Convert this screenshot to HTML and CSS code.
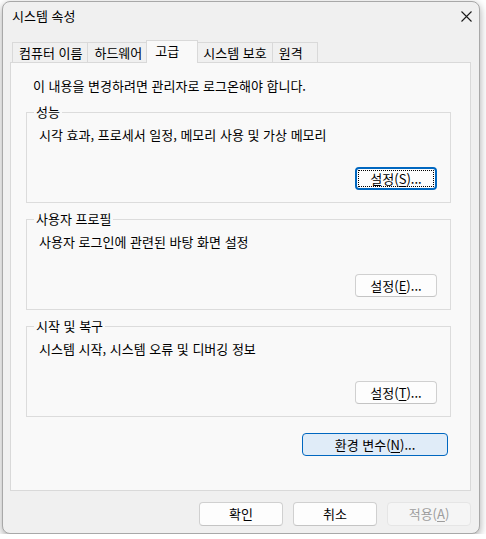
FILE: index.html
```html
<!DOCTYPE html>
<html lang="ko">
<head>
<meta charset="utf-8">
<title>시스템 속성</title>
<link rel="stylesheet" href="styles.css">
</head>
<body>
<div class="window">
  <div class="titlebar">
    <span class="title">시스템 속성</span>
    <span class="close" aria-label="닫기">
      <svg width="11" height="11" viewBox="0 0 11 11"><path d="M0.5 0.5 L10.5 10.5 M10.5 0.5 L0.5 10.5" stroke="#1a1a1a" stroke-width="1.1" fill="none"/></svg>
    </span>
  </div>
  <div class="content">
    <div class="tabs">
      <div class="tab">컴퓨터 이름</div>
      <div class="tab">하드웨어</div>
      <div class="tab tab-active">고급</div>
      <div class="tab">시스템 보호</div>
      <div class="tab">원격</div>
    </div>
    <div class="panel">
      <p class="note">이 내용을 변경하려면 관리자로 로그온해야 합니다.</p>
      <fieldset class="group">
        <legend>성능</legend>
        <p class="desc">시각 효과, 프로세서 일정, 메모리 사용 및 가상 메모리</p>
        <div class="actions"><button class="btn btn-focus">설정(<u>S</u>)...</button></div>
      </fieldset>
      <fieldset class="group">
        <legend>사용자 프로필</legend>
        <p class="desc">사용자 로그인에 관련된 바탕 화면 설정</p>
        <div class="actions"><button class="btn">설정(<u>E</u>)...</button></div>
      </fieldset>
      <fieldset class="group">
        <legend>시작 및 복구</legend>
        <p class="desc">시스템 시작, 시스템 오류 및 디버깅 정보</p>
        <div class="actions"><button class="btn">설정(<u>T</u>)...</button></div>
      </fieldset>
      <div class="env-row"><button class="btn btn-env">환경 변수(<u>N</u>)...</button></div>
    </div>
    <div class="footer">
      <button class="btn btn-foot">확인</button>
      <button class="btn btn-foot">취소</button>
      <button class="btn btn-foot btn-disabled">적용(<u>A</u>)</button>
    </div>
  </div>
</div>
</body>
</html>
```
FILE: styles.css
```css
* { box-sizing: border-box; }
html, body { margin: 0; }
body {
  background: #ffffff;
  padding: 1px 0 0 2px;
  font-family: "Noto Sans CJK KR", "Noto Sans", sans-serif;
  font-size: 13px;
  line-height: 16px;
  color: #000;
}
.window {
  width: 478px;
  height: 533px;
  background: #f0f0f0;
  border: 1px solid #a8a8a8;
  border-radius: 8px;
  box-shadow: 0 3px 8px rgba(0, 0, 0, 0.35);
  display: flex;
  flex-direction: column;
  overflow: hidden;
}
.titlebar {
  height: 28px;
  flex: none;
  display: flex;
  align-items: center;
  justify-content: space-between;
  padding-left: 9px;
}
.close {
  width: 24px;
  height: 28px;
  margin-right: 1px;
  display: flex;
  align-items: center;
  justify-content: center;
}
.close svg { display: block; }
.content {
  flex: 1;
  display: flex;
  flex-direction: column;
  padding: 10px 8px 0 7px;
}
.tabs {
  flex: none;
  display: flex;
  align-items: flex-end;
  height: 23px;
  margin-bottom: -1px;
  padding-left: 2px;
  position: relative;
  z-index: 1;
}
.tab {
  height: 20px;
  min-width: 46px;
  margin-bottom: 1px;
  padding: 0 5px 0 6px;
  display: flex;
  align-items: center;
  border: 1px solid #d9d9d9;
  border-bottom: none;
  background: #f0f0f0;
  margin-left: -1px;
  white-space: nowrap;
}
.tab:first-child { margin-left: 0; }
.tab-active {
  height: 23px;
  min-width: 52px;
  margin-bottom: 0;
  margin-left: -2px;
  margin-right: -1px;
  padding: 0 6px 2px 8px;
  background: #f9f9f9;
  position: relative;
  z-index: 2;
}
.panel {
  flex: 1;
  background: #f9f9f9;
  border: 1px solid #d9d9d9;
  padding: 15px 19px 0 15px;
  display: flex;
  flex-direction: column;
}
.note {
  margin: 0 0 11px 7px;
}
.group {
  margin: 0 0 9px 0;
  padding: 0 13px 12px 7px;
  border: 1px solid #dcdcdc;
  min-width: 0;
}
.group legend {
  padding: 0 2px;
  line-height: 14px;
}
.desc {
  margin: 8px 0 0 5px;
}
.actions {
  display: flex;
  justify-content: flex-end;
  margin-top: 24px;
}
.btn {
  font-family: inherit;
  font-size: 13px;
  line-height: 16px;
  color: #000;
  background: #fdfdfd;
  border: 1px solid #d0d0d0;
  border-bottom-color: #c4c4c4;
  border-radius: 4px;
  height: 23px;
  width: 82px;
  padding: 0;
  margin: 0;
  display: flex;
  align-items: center;
  justify-content: center;
}
.btn u { text-underline-offset: 2px; }
.btn-focus {
  border: 2px solid #0067c0;
  outline: 1px dotted #000;
  outline-offset: -4px;
}
.env-row {
  display: flex;
  justify-content: flex-end;
  margin: 7px 3px 0 0;
}
.btn-env {
  width: 146px;
  background: #e0ecf8;
  border: 1px solid #0067c0;
}
.footer {
  flex: none;
  display: flex;
  justify-content: flex-end;
  gap: 10px;
  padding: 11px 0 7px 0;
}
.btn-foot {
  width: 84px;
  height: 24px;
}
.btn-disabled {
  color: #9d9d9d;
  background: #f5f5f5;
  border-color: #e5e5e5;
}
```
